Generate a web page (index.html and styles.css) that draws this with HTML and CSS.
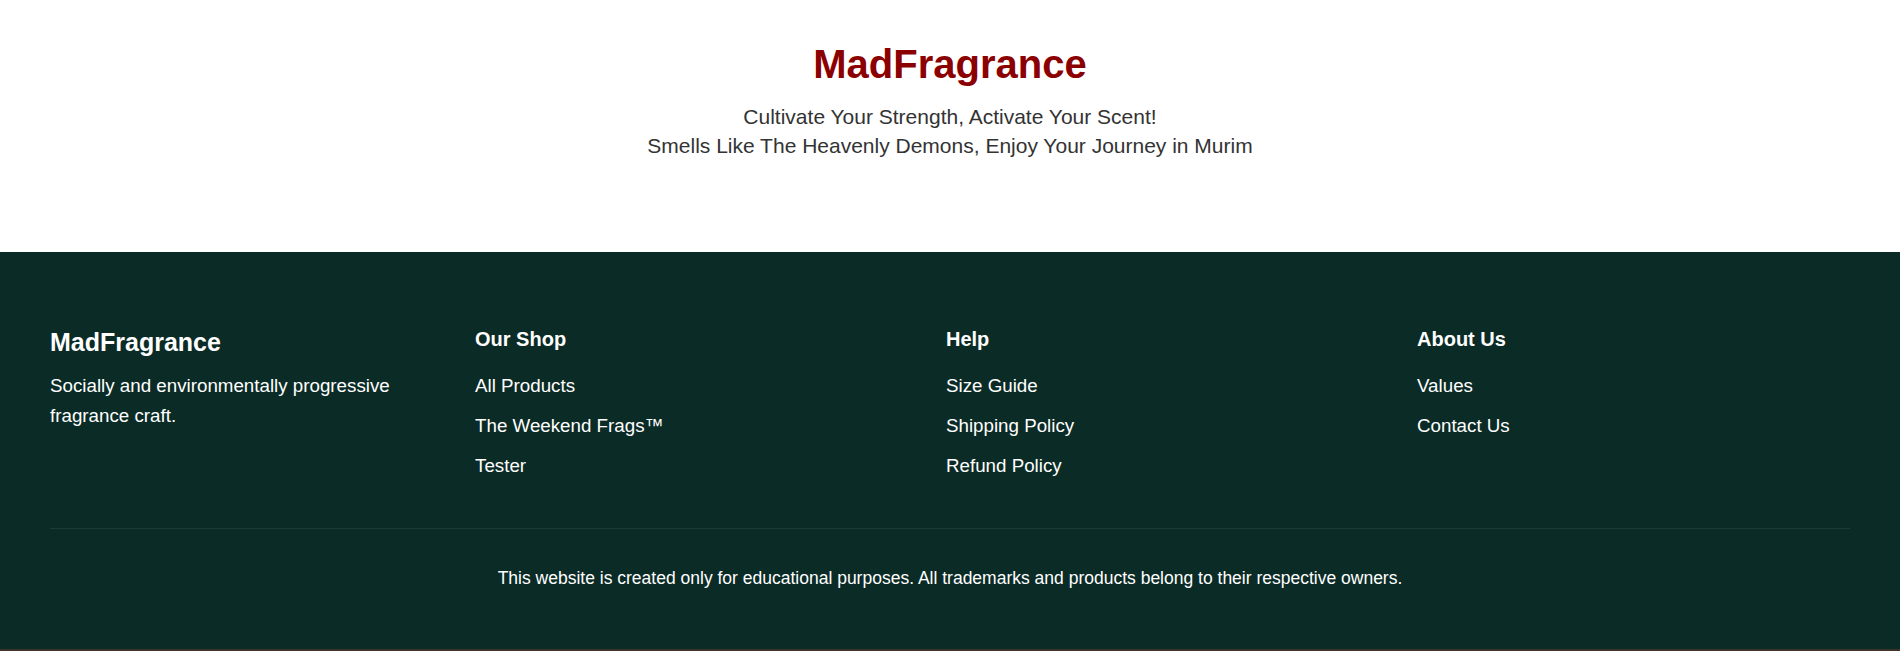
FILE: index.html
```html
<!DOCTYPE html>
<html lang="en">
<head>
<meta charset="utf-8">
<title>MadFragrance</title>
<link rel="stylesheet" href="styles.css">
</head>
<body>
<header class="hero">
  <h1 class="hero-title">MadFragrance</h1>
  <p class="hero-tagline">Cultivate Your Strength, Activate Your Scent!<br>Smells Like The Heavenly Demons, Enjoy Your Journey in Murim</p>
</header>
<footer class="site-footer">
  <div class="footer-grid">
    <div class="footer-brand">
      <h3 class="brand-name">MadFragrance</h3>
      <p class="brand-text">Socially and environmentally progressive fragrance craft.</p>
    </div>
    <div class="footer-col">
      <h4 class="col-title">Our Shop</h4>
      <ul class="col-links">
        <li><a href="#">All Products</a></li>
        <li><a href="#">The Weekend Frags™</a></li>
        <li><a href="#">Tester</a></li>
      </ul>
    </div>
    <div class="footer-col">
      <h4 class="col-title">Help</h4>
      <ul class="col-links">
        <li><a href="#">Size Guide</a></li>
        <li><a href="#">Shipping Policy</a></li>
        <li><a href="#">Refund Policy</a></li>
      </ul>
    </div>
    <div class="footer-col">
      <h4 class="col-title">About Us</h4>
      <ul class="col-links">
        <li><a href="#">Values</a></li>
        <li><a href="#">Contact Us</a></li>
      </ul>
    </div>
  </div>
  <div class="footer-bottom">
    <p class="legal">This website is created only for educational purposes. All trademarks and products belong to their respective owners.</p>
  </div>
</footer>
</body>
</html>
```

FILE: styles.css
```css
* { box-sizing: border-box; }

html, body {
  margin: 0;
  padding: 0;
}

body {
  font-family: "Liberation Sans", Arial, sans-serif;
  background: #ffffff;
  color: #333333;
}

.hero {
  text-align: center;
  padding: 40px 20px 92px;
}

.hero-title {
  margin: 0 0 14px;
  font-size: 40px;
  line-height: 48px;
  font-weight: 700;
  color: #8b0000;
}

.hero-tagline {
  margin: 0;
  font-size: 21px;
  line-height: 29px;
  color: #333333;
}

.site-footer {
  background: #0b2b26;
  color: #ffffff;
  padding: 75px 50px 57px;
  border-bottom: 2px solid #3b3327;
}

.footer-grid {
  display: grid;
  grid-template-columns: 385px 431px 431px 1fr;
  column-gap: 40px;
  margin-bottom: 47px;
}

.brand-name {
  margin: 0 0 14px;
  font-size: 25px;
  line-height: 30px;
  font-weight: 700;
}

.brand-text {
  margin: 0;
  font-size: 18.75px;
  line-height: 30px;
}

.col-title {
  margin: 0 0 20px;
  font-size: 20px;
  line-height: 24px;
  font-weight: 700;
}

.col-links {
  list-style: none;
  margin: 0;
  padding: 0;
  display: flex;
  flex-direction: column;
  gap: 10px;
}

.col-links li {
  font-size: 18.75px;
  line-height: 30px;
}

.col-links a {
  color: #ffffff;
  text-decoration: none;
}

.footer-bottom {
  border-top: 1px solid rgba(255, 255, 255, 0.08);
  padding-top: 35px;
  text-align: center;
}

.legal {
  margin: 0;
  font-size: 17.5px;
  line-height: 28px;
}
```
